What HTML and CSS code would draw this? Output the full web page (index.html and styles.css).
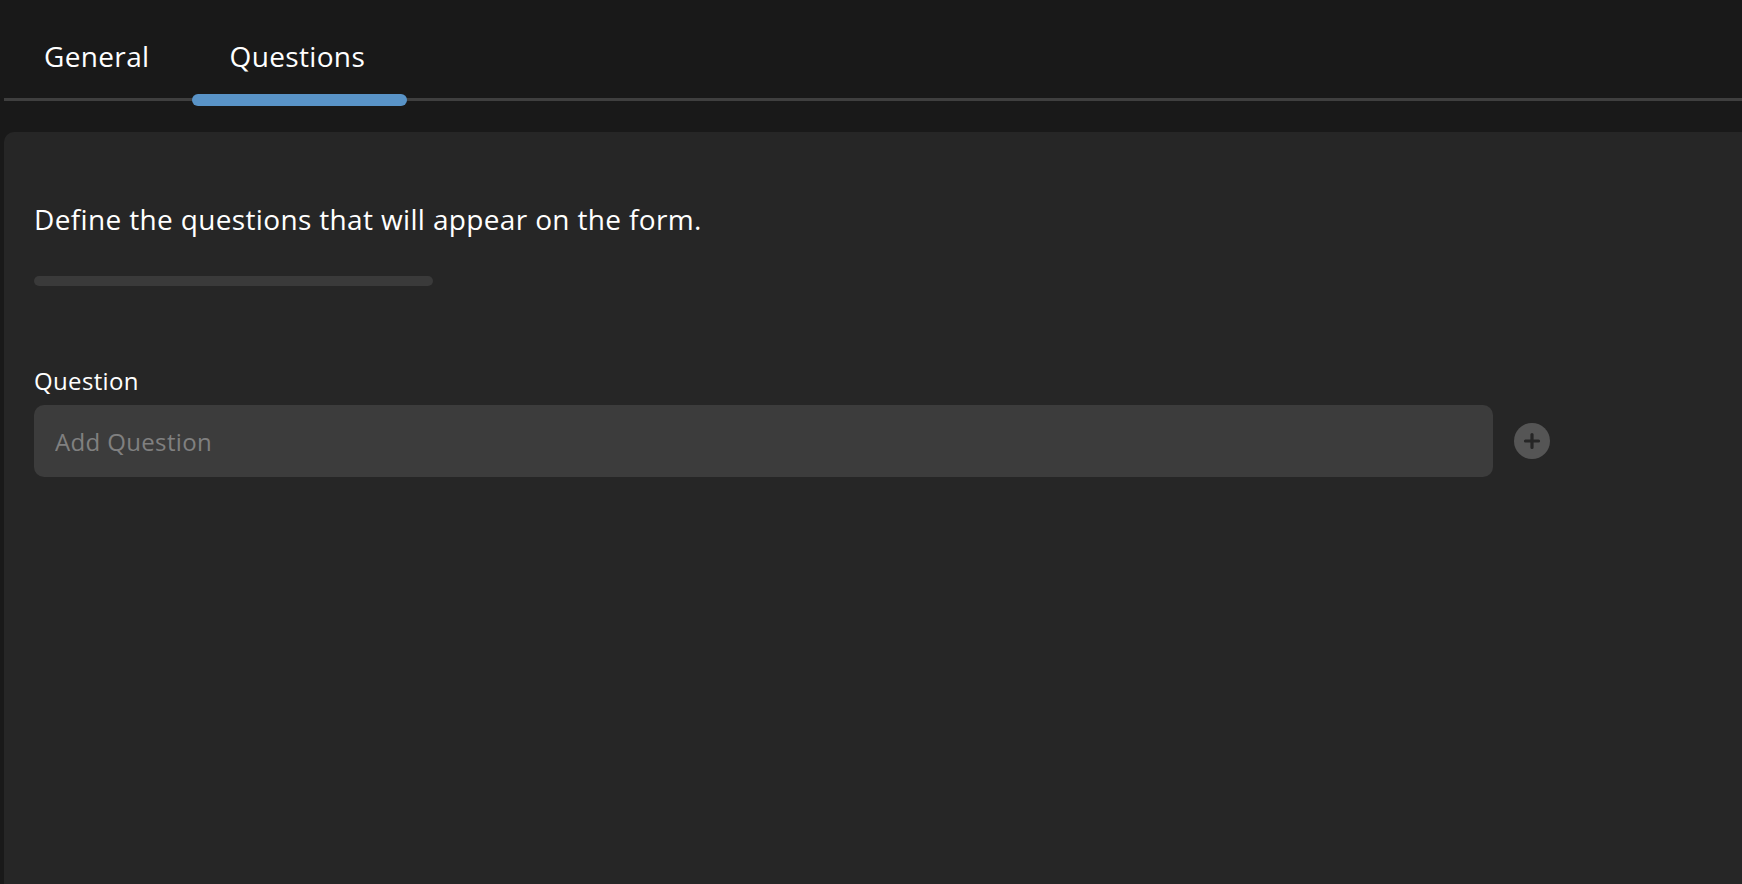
FILE: index.html
```html
<!DOCTYPE html>
<html lang="en">
<head>
<meta charset="utf-8">
<title>Form questions</title>
<link rel="stylesheet" href="styles.css">
</head>
<body>
<div class="page">
  <nav class="tabbar">
    <div class="tab">General</div>
    <div class="tab tab-active">Questions<span class="indicator"></span></div>
  </nav>
  <section class="card">
    <h2 class="heading">Define the questions that will appear on the form.</h2>
    <div class="progress"></div>
    <label class="label" for="q">Question</label>
    <div class="row">
      <input class="input" id="q" type="text" placeholder="Add Question">
      <button class="add" type="button" aria-label="Add question">
        <svg viewBox="0 0 36 36" width="36" height="36">
          <circle cx="18" cy="18" r="18" fill="#555555"/>
          <path d="M18 11.5v13M11.5 18h13" stroke="#262626" stroke-width="3.2" stroke-linecap="round"/>
        </svg>
      </button>
    </div>
  </section>
</div>
</body>
</html>
```

FILE: styles.css
```css
html, body {
  margin: 0;
  padding: 0;
  background: #191919;
  height: 100%;
  overflow: hidden;
}
body {
  font-family: "Open Sans", "Liberation Sans", sans-serif;
  letter-spacing: 0.35px;
  color: #ffffff;
}
.page {
  padding-left: 4px;
  display: flex;
  flex-direction: column;
  height: 100%;
  box-sizing: border-box;
}
.tabbar {
  display: flex;
  padding-top: 39px;
  border-bottom: 3px solid #3f3f3f;
}
.tab {
  position: relative;
  padding: 0 40px 25px;
  font-size: 28px;
  line-height: 34px;
  color: #ffffff;
}
.indicator {
  position: absolute;
  left: 2px;
  right: -2px;
  bottom: -7.5px;
  height: 12px;
  border-radius: 6px;
  background: #5993c7;
}
.card {
  flex: 1;
  margin-top: 31px;
  background: #262626;
  border-top-left-radius: 10px;
  padding: 70px 30px 0;
}
.heading {
  margin: 0;
  font-size: 28px;
  line-height: 34px;
  font-weight: 400;
}
.progress {
  margin-top: 40px;
  width: 399px;
  height: 10px;
  border-radius: 5px;
  background: #3a3a3a;
}
.label {
  display: block;
  margin-top: 80px;
  font-size: 24px;
  line-height: 29px;
}
.row {
  display: flex;
  align-items: center;
  gap: 21px;
  margin-top: 10px;
}
.input {
  width: 1459px;
  height: 72px;
  box-sizing: border-box;
  border: none;
  outline: none;
  border-radius: 10px;
  background: #3c3c3c;
  padding: 0 21px;
  font-family: inherit;
  font-size: 24px;
  letter-spacing: 0.35px;
  color: #ffffff;
}
.input::placeholder {
  color: #808080;
}
.add {
  width: 36px;
  height: 36px;
  padding: 0;
  border: none;
  background: none;
  display: block;
}
.add svg {
  display: block;
}
```
